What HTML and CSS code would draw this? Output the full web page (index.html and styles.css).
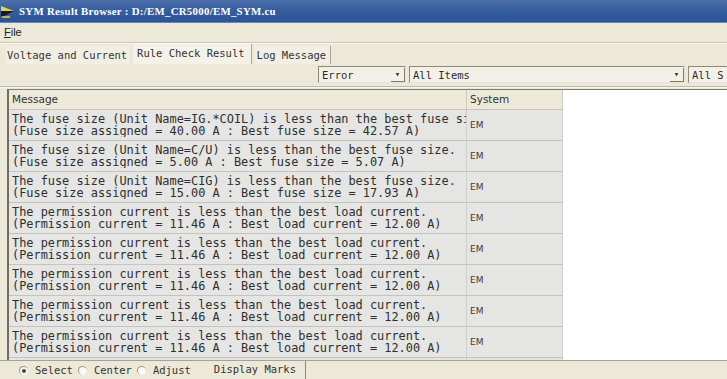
FILE: index.html
```html
<!DOCTYPE html>
<html lang="en">
<head>
    <meta charset="UTF-8">
    <meta name="viewport" content="width=device-width, initial-scale=1.0">
    <link rel="stylesheet" href="styles.css">
</head>
<body>
    <div class="window">
        <div class="titlebar">
            <svg class="app-icon" width="16" height="16" viewBox="0 0 16 16">
                <path d="M0 3 L13 8 L0 8 Z" fill="#e8d23a"/>
                <path d="M0 8 L13 8 L3 13 L0 13 Z" fill="#1a1a1a"/>
                <path d="M1 14 L9 14" stroke="#e8d23a" stroke-width="1.5"/>
            </svg>
            <span class="title">SYM Result Browser : D:/EM_CR5000/EM_SYM.cu</span>
        </div>
        <div class="menubar">
            <span class="menu-item"><u>F</u>ile</span>
        </div>
        <div class="tabs">
            <span class="tab">Voltage and Current</span>
            <span class="tab active">Rule Check Result</span>
            <span class="tab last">Log Message</span>
        </div>
        <div class="filters">
            <div class="combo combo-level">
                <span class="combo-text">Error</span>
                <span class="combo-btn">&#9662;</span>
            </div>
            <div class="combo combo-items">
                <span class="combo-text">All Items</span>
                <span class="combo-btn">&#9662;</span>
            </div>
            <div class="combo combo-sys">
                <span class="combo-text">All S</span>
            </div>
        </div>
        <div class="grid">
            <table class="results">
                <thead>
                    <tr>
                        <th class="col-msg">Message</th>
                        <th class="col-sys">System</th>
                    </tr>
                </thead>
                <tbody>
                    <tr>
                        <td class="col-msg"><div class="msg">The fuse size (Unit Name=IG.*COIL) is less than the best fuse size.
(Fuse size assigned = 40.00 A : Best fuse size = 42.57 A)</div></td>
                        <td class="col-sys">EM</td>
                    </tr>
                    <tr>
                        <td class="col-msg"><div class="msg">The fuse size (Unit Name=C/U) is less than the best fuse size.
(Fuse size assigned = 5.00 A : Best fuse size = 5.07 A)</div></td>
                        <td class="col-sys">EM</td>
                    </tr>
                    <tr>
                        <td class="col-msg"><div class="msg">The fuse size (Unit Name=CIG) is less than the best fuse size.
(Fuse size assigned = 15.00 A : Best fuse size = 17.93 A)</div></td>
                        <td class="col-sys">EM</td>
                    </tr>
                    <tr>
                        <td class="col-msg"><div class="msg">The permission current is less than the best load current.
(Permission current = 11.46 A : Best load current = 12.00 A)</div></td>
                        <td class="col-sys">EM</td>
                    </tr>
                    <tr>
                        <td class="col-msg"><div class="msg">The permission current is less than the best load current.
(Permission current = 11.46 A : Best load current = 12.00 A)</div></td>
                        <td class="col-sys">EM</td>
                    </tr>
                    <tr>
                        <td class="col-msg"><div class="msg">The permission current is less than the best load current.
(Permission current = 11.46 A : Best load current = 12.00 A)</div></td>
                        <td class="col-sys">EM</td>
                    </tr>
                    <tr>
                        <td class="col-msg"><div class="msg">The permission current is less than the best load current.
(Permission current = 11.46 A : Best load current = 12.00 A)</div></td>
                        <td class="col-sys">EM</td>
                    </tr>
                    <tr>
                        <td class="col-msg"><div class="msg">The permission current is less than the best load current.
(Permission current = 11.46 A : Best load current = 12.00 A)</div></td>
                        <td class="col-sys">EM</td>
                    </tr>
                    <tr>
                        <td class="col-msg"><div class="msg">The permission current is less than the best load current.
(Permission current = 11.46 A : Best load current = 12.00 A)</div></td>
                        <td class="col-sys">EM</td>
                    </tr>
                </tbody>
            </table>
        </div>
        <div class="statusbar">
            <label class="radio"><span class="dot checked"></span>Select</label>
            <label class="radio"><span class="dot"></span>Center</label>
            <label class="radio"><span class="dot"></span>Adjust</label>
            <span class="status-btn">Display Marks</span>
        </div>
    </div>
</body>
</html>
```

FILE: styles.css
```css
body {
    margin: 0;
    padding: 0;
    background-color: #ece9d8;
    font-family: "DejaVu Sans Mono", monospace;
    color: #2b2b2b;
    overflow: hidden;
}

.window {
    width: 727px;
    height: 379px;
    display: flex;
    flex-direction: column;
    overflow: hidden;
}

/* title bar */
.titlebar {
    height: 22px;
    display: flex;
    align-items: center;
    background: linear-gradient(to bottom, #4d70ab 0%, #365e9f 45%, #2d5496 100%);
    border-bottom: 1px solid #6a86b5;
}
.app-icon {
    margin-left: 1px;
    margin-right: 2px;
}
.title {
    color: #fff;
    font-family: "Liberation Serif", serif;
    font-weight: bold;
    font-size: 10.8px;
    letter-spacing: 0.3px;
}

/* menu */
.menubar {
    height: 19px;
    display: flex;
    align-items: center;
    border-bottom: 1px solid #c9c6b6;
    box-shadow: 0 1px 0 #fbfaf4;
}
.menu-item {
    margin-left: 4px;
    font-family: "Liberation Sans", sans-serif;
    font-size: 11px;
    color: #222;
}

/* tabs */
.tabs {
    height: 20px;
    display: flex;
    align-items: flex-end;
    padding-left: 6px;
    margin-top: 1px;
}
.tab {
    height: 18px;
    line-height: 18px;
    font-size: 10.5px;
    padding: 0 3px 0 1px;
    color: #333;
    background-color: #f1efe4;
}
.tab.active {
    height: 20px;
    line-height: 18px;
    margin-left: 3px;
    padding: 0 6px 0 4px;
    background-color: #f4f2e8;
    border-right: 1px solid #a9a697;
}
.tab.last {
    margin-left: 3px;
    padding: 0 4px 0 2px;
    border-right: 1px solid #a9a697;
}

/* filters */
.filters {
    height: 22px;
    display: flex;
    align-items: center;
    padding-left: 318px;
    border-bottom: 1px solid #bdbaa9;
    box-shadow: 0 1px 0 #f7f6ee;
}
.combo {
    flex-shrink: 0;
    height: 15px;
    display: flex;
    align-items: center;
    background-color: #f3f1e7;
    border: 1px solid #8d8a7b;
    border-right-color: #e5e3d8;
    border-bottom-color: #e5e3d8;
    font-size: 10.5px;
    margin-right: 3px;
}
.combo-text {
    flex: 1;
    padding-left: 3px;
    white-space: nowrap;
    overflow: hidden;
}
.combo-btn {
    width: 13px;
    height: 13px;
    font-size: 9px;
    line-height: 13px;
    text-align: center;
    color: #333;
    border-right: 1px solid #7f7d70;
    border-bottom: 1px solid #7f7d70;
}
.combo-level {
    width: 86px;
}
.combo-items {
    width: 274px;
}
.combo-sys {
    width: 38px;
    border-right: none;
}

/* grid */
.grid {
    height: 271px;
    margin-top: 2px;
    margin-left: 7px;
    background-color: #ffffff;
    border-top: 1px solid #7d7b70;
    border-left: 2px solid #6f6d63;
    overflow: hidden;
}
.results {
    border-collapse: collapse;
    table-layout: fixed;
    width: 553px;
}
.results th {
    height: 19px;
    text-align: left;
    font-family: "DejaVu Sans", sans-serif;
    font-weight: normal;
    font-size: 10.5px;
    color: #333;
    background-color: #ece9d8;
    padding: 0 3px;
    border-right: 1px solid #cfccbd;
    border-bottom: 1px solid #c6c3b4;
}
.results td {
    height: 30px;
    padding: 0 0 0 3px;
    background-color: #e5e5e3;
    border-right: 1px solid #d0d0cc;
    border-bottom: 1px solid #c3c3bf;
    vertical-align: top;
}
.col-msg {
    width: 451px;
}
.col-sys {
    width: 89px;
}
.msg {
    font-size: 11.9px;
    line-height: 12px;
    padding-top: 3px;
    white-space: pre;
    overflow: hidden;
    color: #2f2f2f;
}
.results td.col-sys {
    vertical-align: middle;
    font-family: "DejaVu Sans", sans-serif;
    font-size: 9px;
    color: #3a3a3a;
}

/* status bar */
.statusbar {
    height: 18px;
    display: flex;
    align-items: center;
    border-top: 1px solid #a6a395;
    font-size: 10.5px;
    line-height: 13px;
    color: #333;
    padding-left: 19px;
}
.radio {
    display: flex;
    align-items: center;
    margin-right: 5px;
}
.dot {
    flex-shrink: 0;
    width: 8px;
    height: 8px;
    border-radius: 50%;
    background-color: #fbfaf6;
    border-left: 1px solid #9a988c;
    border-top: 1px solid #9a988c;
    margin-right: 7px;
    position: relative;
}
.dot.checked::after {
    content: "";
    position: absolute;
    left: 2px;
    top: 2px;
    width: 4px;
    height: 4px;
    border-radius: 50%;
    background-color: #444;
}
.status-btn {
    margin-left: 18px;
    padding: 2px 9px 3px 0;
    border-right: 1px solid #8a8778;
}
```
